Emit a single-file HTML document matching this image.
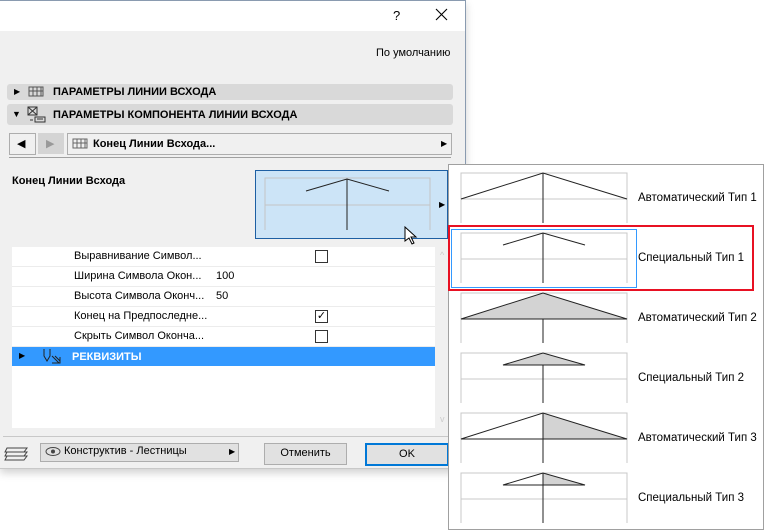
<!DOCTYPE html>
<html><head><meta charset="utf-8"><style>
body{margin:0;width:764px;height:530px;background:#fff;position:relative;overflow:hidden;font-family:"Liberation Sans","DejaVu Sans",sans-serif;font-size:11px;color:#000}
.a{position:absolute}
.dlg{left:0;top:0;width:465px;height:467px;background:#f0f0f0;border-right:1px solid #8a9bb0;border-top:1px solid #8a9bb0;border-bottom:1px solid #c8c8c8;box-shadow:0 4px 8px rgba(0,0,0,.18)}
.hdr{background:#d9d9d9;border-radius:3px;font-weight:bold;font-size:11px}
.row{left:12px;width:423px;height:19px;border-bottom:1px solid #ececec;background:#fff}
.row span{position:absolute;top:3px}
.cb{position:absolute;left:303px;top:3px;width:11px;height:11px;border:1px solid #333;background:#fff}
.btn{background:#e1e1e1;border:1px solid #adadad;text-align:center;line-height:19px;font-size:11px}
.lbl{left:638px;font-size:11.5px}
</style></head><body>
<div class="a dlg"></div>
<div class="a" style="left:0;top:1px;width:465px;height:30px;background:#fff"></div>
<div class="a" style="left:393px;top:8px;font-size:13px">?</div>
<svg class="a" style="left:435px;top:8px" width="14" height="14"><path d="M1 1l11 11M12 1L1 12" stroke="#000" stroke-width="1.1"/></svg>
<div class="a" style="left:376px;top:47px">По умолчанию</div>

<div class="a hdr" style="left:7px;top:84px;width:446px;height:16px"></div>
<div class="a" style="left:14px;top:87px;font-size:8px">▶</div>
<svg class="a" style="left:28px;top:85px" width="18" height="13"><rect x="1" y="2" width="14" height="9" fill="none" stroke="#555"/><path d="M5 2v9M9 2v9M13 2v9M1 6h14" stroke="#555"/></svg>
<div class="a" style="left:53px;top:86px;font-weight:bold">ПАРАМЕТРЫ ЛИНИИ ВСХОДА</div>
<div class="a hdr" style="left:7px;top:104px;width:446px;height:21px"></div>
<div class="a" style="left:12px;top:109px;font-size:9px">▼</div>
<svg class="a" style="left:27px;top:106px" width="20" height="17"><rect x="1" y="1" width="9" height="8" fill="none" stroke="#333"/><path d="M1 1l9 8M10 1l-9 8M8 11h10v5H8zM10 13h6M3 14h3" stroke="#333" fill="none"/></svg>
<div class="a" style="left:53px;top:109px;font-weight:bold">ПАРАМЕТРЫ КОМПОНЕНТА ЛИНИИ ВСХОДА</div>

<div class="a" style="left:9px;top:133px;width:25px;height:20px;border:1px solid #adadad;background:#f0f0f0"></div>
<div class="a" style="left:17px;top:137px;font-size:11px">◀</div>
<div class="a" style="left:38px;top:133px;width:26px;height:21px;background:#d4d4d4"></div>
<div class="a" style="left:46px;top:137px;font-size:11px;color:#999">▶</div>
<div class="a" style="left:67px;top:133px;width:383px;height:20px;border:1px solid #adadad;background:#f0f0f0"></div>
<svg class="a" style="left:72px;top:137px" width="18" height="13"><rect x="1" y="2" width="14" height="9" fill="none" stroke="#666"/><path d="M5 2v9M9 2v9M13 2v9M1 6h14" stroke="#666"/></svg>
<div class="a" style="left:93px;top:138px;font-weight:bold">Конец Линии Всхода...</div>
<div class="a" style="left:441px;top:139px;font-size:8px">▶</div>
<div class="a" style="left:9px;top:157px;width:442px;height:1px;background:#a0a0a0"></div>

<div class="a" style="left:12px;top:175px;font-weight:bold">Конец Линии Всхода</div>
<div class="a" style="left:255px;top:170px;width:191px;height:67px;background:#cce4f7;border:1px solid #1d5fa3"></div>
<svg class="a" style="left:255px;top:170px" width="193" height="69"><path d="M10 60V8h165v52M10 35h165" stroke="#c4c4c4" fill="none"/><path d="M92 9v51M51 21l41-12 42 12" stroke="#222" fill="none"/></svg>
<div class="a" style="left:439px;top:200px;font-size:8px">▶</div>
<svg class="a" style="left:404px;top:226px" width="14" height="20"><path d="M1 1v14l4-3 3 6 2-1-3-6h5z" fill="#fff" stroke="#000"/></svg>

<div class="a" style="left:12px;top:247px;width:423px;height:181px;background:#fff"></div>
<div class="a row" style="top:247px"><span style="left:62px">Выравнивание Символ...</span><div class="cb"></div></div>
<div class="a row" style="top:267px"><span style="left:62px">Ширина Символа Окон...</span><span style="left:204px">100</span></div>
<div class="a row" style="top:287px"><span style="left:62px">Высота Символа Оконч...</span><span style="left:204px">50</span></div>
<div class="a row" style="top:307px"><span style="left:62px">Конец на Предпоследне...</span><div class="cb" style="font-size:11px;line-height:11px;text-align:center">✓</div></div>
<div class="a row" style="top:327px"><span style="left:62px">Скрыть Символ Оконча...</span><div class="cb"></div></div>
<div class="a" style="left:12px;top:347px;width:423px;height:19px;background:#3399ff"></div>
<div class="a" style="left:19px;top:351px;font-size:8px">▶</div>
<svg class="a" style="left:42px;top:348px" width="20" height="17"><path d="M2 1v7l3 5 3-5V1M10 8l7 7M13 8l5 5M10 15h8V9" stroke="#222" fill="none"/></svg>
<div class="a" style="left:72px;top:351px;font-weight:bold;color:#fff">РЕКВИЗИТЫ</div>
<div class="a" style="left:440px;top:250px;color:#ccc;font-size:9px">^</div>
<div class="a" style="left:440px;top:414px;color:#ccc;font-size:9px">v</div>
<div class="a" style="left:3px;top:436px;width:460px;height:1px;background:#c8c8c8"></div>

<svg class="a" style="left:4px;top:443px" width="28" height="18"><path d="M3 5h20l-3 4H1zM3 9h20l-3 4H1zM3 13h20l-3 4H1z" fill="none" stroke="#444"/></svg>
<div class="a" style="left:40px;top:443px;width:197px;height:17px;border:1px solid #adadad;background:#e1e1e1"></div>
<svg class="a" style="left:45px;top:446px" width="17" height="11"><ellipse cx="8" cy="5.5" rx="7" ry="4" fill="none" stroke="#444"/><circle cx="8" cy="5.5" r="2" fill="#444"/></svg>
<div class="a" style="left:64px;top:445px">Конструктив - Лестницы</div>
<div class="a" style="left:229px;top:447px;font-size:8px">▶</div>
<div class="a btn" style="left:264px;top:443px;width:81px;height:20px">Отменить</div>
<div class="a btn" style="left:365px;top:443px;width:80px;height:19px;border:2px solid #0078d7">OK</div>

<div class="a" style="left:448px;top:164px;width:314px;height:364px;background:#fff;border:1px solid #a0a0a0"></div>
<svg class="a" style="left:448px;top:164px" width="316" height="366">
<g fill="none">
<g transform="translate(0,0)"><path d="M13 59V9h166v50M13 35h166" stroke="#c8c8c8"/><path d="M95 9v50M13 35L95 9l84 26" stroke="#222"/></g>
<g transform="translate(0,60)"><path d="M13 59V9h166v50M13 35h166" stroke="#c8c8c8"/><path d="M95 9v50M55 21l40-12 42 12" stroke="#222"/></g>
<g transform="translate(0,120)"><path d="M13 59V9h166v50M13 35h166" stroke="#c8c8c8"/><path d="M13 35L95 9l84 26z" fill="#d3d3d3" stroke="#222"/><path d="M95 35v24" stroke="#222"/></g>
<g transform="translate(0,180)"><path d="M13 59V9h166v50M13 35h166" stroke="#c8c8c8"/><path d="M55 21l40-12 42 12z" fill="#d3d3d3" stroke="#222"/><path d="M95 21v38" stroke="#222"/></g>
<g transform="translate(0,240)"><path d="M13 59V9h166v50" stroke="#c8c8c8"/><path d="M95 9l84 26H95z" fill="#d3d3d3"/><path d="M13 35L95 9l84 26zM95 9v50" stroke="#222"/></g>
<g transform="translate(0,300)"><path d="M13 59V9h166v50M13 35h166" stroke="#c8c8c8"/><path d="M95 9l42 12H95z" fill="#d3d3d3"/><path d="M55 21l40-12 42 12zM95 9v50" stroke="#222"/></g>
</g>
<rect x="3.5" y="65.5" width="185" height="58" fill="none" stroke="#3399ff"/>
<rect x="1" y="62" width="304" height="64" fill="none" stroke="#e81123" stroke-width="2"/>
</svg>
<div class="a lbl" style="top:192px">Автоматический Тип 1</div>
<div class="a lbl" style="top:252px">Специальный Тип 1</div>
<div class="a lbl" style="top:312px">Автоматический Тип 2</div>
<div class="a lbl" style="top:372px">Специальный Тип 2</div>
<div class="a lbl" style="top:432px">Автоматический Тип 3</div>
<div class="a lbl" style="top:492px">Специальный Тип 3</div>
</body></html>
